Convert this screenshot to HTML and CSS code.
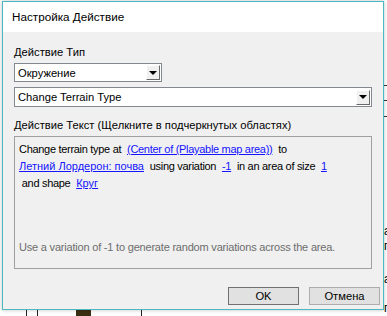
FILE: index.html
```html
<!DOCTYPE html>
<html lang="ru">
<head>
    <meta charset="UTF-8">
    <title>Настройка Действие</title>
    <link rel="stylesheet" href="styles.css">
</head>
<body>
    <!-- bits of the editor window behind the dialog -->
    <div class="backdrop">
        <span class="bg-line" style="top: 85px"></span>
        <span class="bg-line" style="top: 100px"></span>
        <span class="bg-line" style="top: 116px"></span>
        <span class="bg-char" style="top: 224px">а</span>
        <span class="bg-char" style="top: 239px">г</span>
        <span class="bg-char" style="top: 272px">а</span>
        <span class="bg-char" style="top: 301px">г</span>
        <span class="bg-vline" style="left: 26px"></span>
        <span class="bg-vline" style="left: 37px"></span>
        <span class="bg-vline" style="left: 141px"></span>
        <span class="bg-icon"></span>
    </div>

    <div class="dialog">
        <div class="titlebar">Настройка Действие</div>
        <div class="content">
            <div class="label">Действие Тип</div>
            <div class="combo combo-short">
                <span class="combo-text">Окружение</span>
                <span class="combo-btn"><span class="arrow"></span></span>
            </div>
            <div class="combo combo-wide">
                <span class="combo-text">Change Terrain Type</span>
                <span class="combo-btn"><span class="arrow"></span></span>
            </div>
            <div class="label label-text">Действие Текст (Щелкните в подчеркнутых областях)</div>
            <div class="text-box">
                <div class="action-text">
                    Change terrain type at <a class="param">(Center of (Playable map area))</a> to<br>
                    <a class="param first ru">Летний Лордерон: почва</a> using variation <a class="param">-1</a> in an area of size <a class="param">1</a><br>
                    &nbsp;and shape <a class="param ru">Круг</a>
                </div>
                <div class="hint">Use a variation of -1 to generate random variations across the area.</div>
            </div>
            <div class="buttons">
                <button class="btn btn-default">OK</button>
                <button class="btn">Отмена</button>
            </div>
        </div>
    </div>
</body>
</html>
```

FILE: styles.css
```css
body {
    margin: 0;
    background: #ffffff;
    font-family: "Liberation Sans", Arial, sans-serif;
    font-size: 11.2px;
    color: #000000;
    position: relative;
    height: 316px;
    overflow: hidden;
}
.backdrop {
    position: absolute;
    left: 0;
    top: 0;
    width: 387px;
    height: 316px;
}
.bg-line {
    position: absolute;
    left: 384px;
    width: 3px;
    height: 1px;
    background: #333333;
}
.bg-char {
    position: absolute;
    left: 384px;
    font-size: 12px;
    line-height: 14px;
}
.bg-vline {
    position: absolute;
    top: 310px;
    width: 1px;
    height: 6px;
    background: #222222;
}
.bg-icon {
    position: absolute;
    left: 76px;
    top: 310px;
    width: 15px;
    height: 6px;
    background: #3a2e12;
}
.dialog {
    position: absolute;
    left: 2px;
    top: 1px;
    width: 380px;
    height: 307px;
    border: 1px solid #4cb8c2;
    background: #f0f0f0;
    box-shadow: 0 0 4px rgba(0, 0, 0, 0.25);
}
.titlebar {
    height: 30px;
    line-height: 30px;
    padding-left: 9px;
    background: #ffffff;
    font-size: 11.7px;
}
.content {
    padding: 13px 11px 0 11px;
}
.label {
    line-height: 15px;
    margin-bottom: 3px;
}
.combo {
    display: flex;
    align-items: center;
    height: 19px;
    box-sizing: border-box;
    border: 1px solid #828790;
    background: #ffffff;
    margin-bottom: 5px;
}
.combo-short {
    width: 148px;
}
.combo-wide {
    height: 20px;
}
.combo-text {
    flex: 1;
    padding-left: 3px;
}
.combo-btn {
    width: 14px;
    height: 15px;
    margin-right: 1px;
    box-sizing: border-box;
    background: #f0f0f0;
    border: 1px solid;
    border-color: #ffffff #696969 #696969 #ffffff;
    display: flex;
    align-items: center;
    justify-content: center;
}
.arrow {
    width: 0;
    height: 0;
    border-left: 4px solid transparent;
    border-right: 4px solid transparent;
    border-top: 4px solid #000000;
}
.label-text {
    margin-top: 11px;
    margin-bottom: 3px;
}
.text-box {
    height: 133px;
    box-sizing: border-box;
    border: 1px solid #a0a0a0;
    padding: 4px 4px 0 4px;
    display: flex;
    flex-direction: column;
}
.action-text {
    font-size: 11px;
    letter-spacing: -0.3px;
    line-height: 17px;
    flex: 1;
}
.param {
    color: #1515ff;
    text-decoration: underline;
    margin: 0 3px;
}
.param.first {
    margin-left: 0;
}
.param.ru {
    letter-spacing: 0;
}
.hint {
    font-size: 11px;
    letter-spacing: -0.2px;
    color: #6d6d6d;
    line-height: 14px;
    margin-bottom: 14px;
}
.buttons {
    display: flex;
    justify-content: flex-end;
    gap: 10px;
    margin-top: 18px;
    margin-right: -8px;
}
.btn {
    width: 71px;
    height: 18px;
    font-family: "Liberation Sans", Arial, sans-serif;
    font-size: 11.2px;
    background: #e1e1e1;
    border: 1px solid #adadad;
    padding: 0;
}
.btn-default {
    border-color: #707070;
}
```
